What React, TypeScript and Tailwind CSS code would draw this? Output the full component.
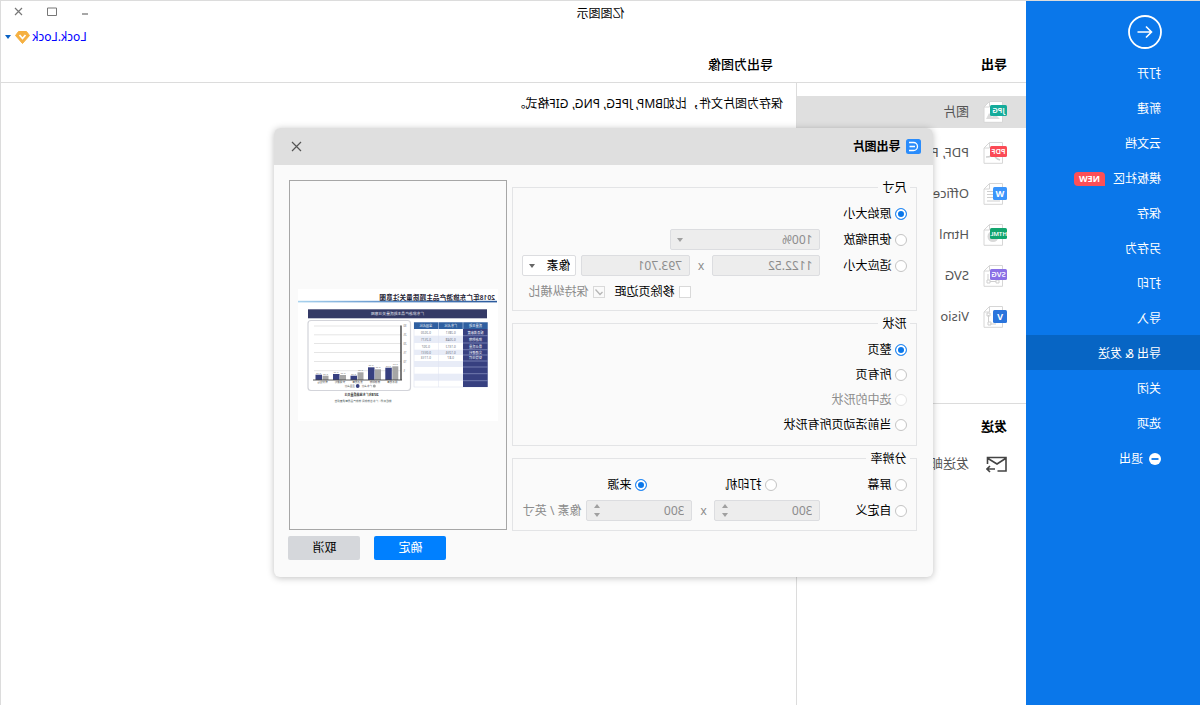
import { useState } from "react";
import type { ReactNode } from "react";

const menu = ["打开", "新建", "云文档", "模板社区", "保存", "另存为", "打印", "导入", "导出 & 发送", "关闭", "选项", "退出"];

const formats = [
  { label: "图片", tag: "JPG", color: "#14ab9a" },
  { label: "PDF, PS, EPS", tag: "PDF", color: "#fb4a55" },
  { label: "Office", tag: "W", color: "#3b95fb" },
  { label: "Html", tag: "HTML", color: "#12a56e" },
  { label: "SVG", tag: "SVG", color: "#8a70e6" },
  { label: "Visio", tag: "V", color: "#2a74dc" },
];

function FormatIcon({ tag, color }: { tag: string; color: string }) {
  const single = tag.length === 1;
  const w = single ? 14 : 17;
  const h = single ? 13 : 11;
  return (
    <svg width="24" height="22" viewBox="0 0 24 22" aria-hidden="true">
      <path d="M4.5 .5H17.5L23 6V21.3H4.5Z" fill="#fff" stroke="#d6d6d6" />
      <path d="M17.5 .5V6H23" fill="none" stroke="#d6d6d6" />
      {tag === "JPG" && <path d="M7 18L12 13L15 16L18 12L21 18Z" fill="#dcdcdc" />}
      {tag === "PDF" && <path d="M7 18C11 17 13 14 14 10C14 14 17 15 21 15" fill="none" stroke="#cfcfcf" strokeWidth="1.6" />}
      {tag === "W" && <path d="M14 8.5H20M14 11.5H20M14 14.5H20M7 18H20" stroke="#cfcfcf" />}
      {tag === "HTML" && <circle cx="14" cy="12.5" r="5.5" fill="#d9d9d9" />}
      {tag === "SVG" && <path d="M8 15h3v3H8zM17 15h3v3h-3zM11 16.5h6M19 9v6" fill="none" stroke="#cfcfcf" />}
      {tag === "V" && <path d="M18.500 9v7M17 7h3v3h-3zM11 18h6M16 16h3v3h-3z" fill="none" stroke="#cfcfcf" />}
      <rect x="0" y="4" width={w} height={h} rx="1.5" fill={color} />
      <text
        x={w / 2}
        y={single ? 14 : 12.3}
        textAnchor="middle"
        fill="#fff"
        fontSize={single ? 9 : tag === "HTML" ? 6 : 7.5}
        fontWeight={single ? 700 : 600}
      >
        {tag}
      </text>
    </svg>
  );
}

function Radio({ name, label, defaultChecked, disabled }: { name: string; label: string; defaultChecked?: boolean; disabled?: boolean }) {
  return (
    <label className={disabled ? "flex items-center gap-1 whitespace-nowrap text-[#8c8c8c]" : "flex items-center gap-1 whitespace-nowrap"}>
      <input
        type="radio"
        name={name}
        defaultChecked={defaultChecked}
        disabled={disabled}
        className="size-3 shrink-0 appearance-none rounded-full border border-[#c4c4c4] bg-white checked:border-[#2b8cf5] checked:bg-[#0a77ea] checked:shadow-[inset_0_0_0_2px_#fff] disabled:border-[#e4e4e4]"
      />
      {label}
    </label>
  );
}

function Check({ label, defaultChecked, disabled }: { label: string; defaultChecked?: boolean; disabled?: boolean }) {
  return (
    <label className={disabled ? "flex items-center gap-1 text-[#8c8c8c]" : "flex items-center gap-1"}>
      <span className="grid size-3 shrink-0">
        <input
          type="checkbox"
          defaultChecked={defaultChecked}
          disabled={disabled}
          className="peer col-start-1 row-start-1 size-3 appearance-none border border-[#d9d9d9] bg-white disabled:bg-[#fafafa]"
        />
        <svg viewBox="0 0 12 12" className="pointer-events-none col-start-1 row-start-1 size-3 opacity-0 peer-checked:opacity-100" aria-hidden="true">
          <path d="M2.500 6L5 8.500L9.500 3.500" fill="none" stroke="#b5b5b5" strokeWidth="1.300" />
        </svg>
      </span>
      {label}
    </label>
  );
}

function Group({ title, className, children }: { title: string; className: string; children: ReactNode }) {
  return (
    <fieldset className="min-w-0 border border-[#e3e4e6]">
      <legend className="ml-1.5 px-1 leading-4">{title}</legend>
      <div className={className}>{children}</div>
    </fieldset>
  );
}

function Caret({ color }: { color: string }) {
  return (
    <svg width="6" height="4" viewBox="0 0 6 4" className="shrink-0" aria-hidden="true">
      <path d="M0 0H6L3 4Z" fill={color} />
    </svg>
  );
}

const field = "h-[21px] w-full min-w-0 rounded-xs border border-[#dcdde0] bg-[#ededed] px-[7px] text-xs text-[#8c8c8c]";

function Spinner({ label }: { label: string }) {
  return (
    <div className="flex h-[21px] min-w-0 flex-1 items-center rounded-xs border border-[#dcdde0] bg-[#ededed] pr-[7px] pl-[7px]">
      <input aria-label={label} defaultValue="300" disabled className="w-0 min-w-0 flex-1 text-xs text-[#8c8c8c]" />
      <div className="flex flex-col gap-[5px]">
        <button type="button" disabled aria-label={`${label} +`}>
          <svg width="6" height="4" viewBox="0 0 6 4" className="block" aria-hidden="true">
            <path d="M0 4H6L3 0Z" fill="#a0a0a0" />
          </svg>
        </button>
        <button type="button" disabled aria-label={`${label} -`}>
          <svg width="6" height="4" viewBox="0 0 6 4" className="block" aria-hidden="true">
            <path d="M0 0H6L3 4Z" fill="#a0a0a0" />
          </svg>
        </button>
      </div>
    </div>
  );
}

const rowLines = [40, 46.7, 54, 60.7, 66, 72, 78, 84.7, 91.7, 98];
const tableRows = [
  ["服务满意度", "0.2851", "0.2020"],
  ["旅游购物", "0.2048", "0.2571"],
  ["景点质量", "0.1312", "0.207"],
  ["交通便利", "0.1256", "0.0551"],
  ["餐饮住宿", "0.87", "0.1153"],
];
const bars = [
  { x: 99.7, gray: 77.3, blue: 78.7, name: "服务质量" },
  { x: 117, gray: 80.3, blue: 78.3, name: "旅游购物" },
  { x: 134.500, gray: 83.3, blue: 86.7, name: "景点质量" },
  { x: 152, gray: 86, blue: 85, name: "交通便利" },
  { x: 169.500, gray: 86.7, blue: 85.7, name: "餐饮住宿" },
];

function SlidePreview() {
  return (
    <svg viewBox="0 0 200 132" className="w-[200px]" role="img" aria-label="导出预览">
      <defs>
        <linearGradient id="rule" x1="0" x2="1">
          <stop offset="0" stopColor="#2b5a9c" />
          <stop offset=".5" stopColor="#5a8cc8" />
          <stop offset="1" stopColor="#a9d3ee" />
        </linearGradient>
      </defs>
      <rect width="200" height="132" fill="#fff" />
      <text x="3" y="10.500" fontSize="6.700" fontWeight="600" fill="#1d2233">2018年广东旅游产品主题质量关注意图</text>
      <rect x="1" y="11.800" width="199" height="1.600" fill="url(#rule)" />
      <rect x="11" y="20.300" width="179" height="9" fill="#343a66" />
      <text x="100.500" y="26.300" fontSize="3.800" textAnchor="middle" fill="#e8e9f2">广东旅游产品主题质量关注意图</text>

      <rect x="10.300" y="33.300" width="73.700" height="64.700" fill="#fff" stroke="#d8dcea" strokeWidth=".5" />
      {[1, 3, 5, 7].map((i) => (
        <rect key={i} x="35" y={rowLines[i]} width="49" height={rowLines[i + 1] - rowLines[i]} fill="#e8ecf7" />
      ))}
      <path d="M59.500 40V98" stroke="#dfe3f0" strokeWidth=".5" />
      <rect x="10.300" y="33.300" width="73.700" height="6.700" fill="#2f5fa0" />
      <rect x="10.300" y="40" width="24.700" height="58" fill="#374080" />
      <path d="M35 33V40M59.500 33V40" stroke="#dfe3f0" strokeWidth=".5" />
      {rowLines.slice(1, 9).map((y) => (
        <path key={y} d={`M10.300 ${y}H35`} stroke="#9aa2cc" strokeWidth=".6" />
      ))}
      {["质量主题", "广东占比", "全国占比"].map((t, i) => (
        <text key={t} x={22.500 + i * 24.800} y="38" fontSize="3.200" textAnchor="middle" fill="#fff">{t}</text>
      ))}
      {tableRows.map((r, i) =>
        r.map((t, j) => (
          <text
            key={t}
            x={22.500 + j * 24.800}
            y={(rowLines[i] + rowLines[i + 1]) / 2 + 1.200}
            fontSize="3.200"
            textAnchor="middle"
            fill={j ? "#6b6f80" : "#fff"}
          >
            {t}
          </text>
        ))
      )}

      <rect x="87.500" y="31.500" width="102.500" height="70" rx="3" fill="#fff" stroke="#d3d4da" strokeWidth="1.200" />
      {[37, 45.8, 54.500, 63.500, 72.500, 81.700].map((y, i) => (
        <g key={y}>
          <path d={`M97 ${y}H184`} stroke="#dedede" strokeWidth=".8" />
          <text x="94.500" y={y + 1} fontSize="2.600" textAnchor="end" fill="#666">{`${30 - i * 5}`}</text>
        </g>
      ))}
      {bars.map((b) => (
        <g key={b.name}>
          <rect x={b.x} y={b.gray} width="6" height={91 - b.gray} fill="#a6a6a6" />
          <rect x={b.x + 6.500} y={b.blue} width="6.500" height={91 - b.blue} fill="#374080" />
          <text x={b.x + 3} y={b.gray - 1} fontSize="2.400" textAnchor="middle" fill="#888">0.28</text>
          <text x={b.x + 10} y={b.blue - 1} fontSize="2.400" textAnchor="middle" fill="#888">0.20</text>
          <text x={b.x + 6} y="94.300" fontSize="2.600" textAnchor="middle" fill="#555">{b.name}</text>
        </g>
      ))}
      <path d="M97 36.500V91" stroke="#333" strokeWidth="1.300" />
      <path d="M96 91H185" stroke="#444" strokeWidth=".9" />
      <circle cx="123.700" cy="97" r="1.500" fill="#a6a6a6" />
      <text x="126" y="98" fontSize="2.600" fill="#555">广东占比</text>
      <circle cx="140.300" cy="97" r="1.900" fill="#374080" />
      <text x="143" y="98" fontSize="2.600" fill="#555">全国占比</text>
      <text x="136.500" y="107.300" fontSize="3" fontWeight="700" textAnchor="middle" fill="#222">2018年广东旅游质量关注</text>
      <text x="135" y="113.300" fontSize="2.700" textAnchor="middle" fill="#566">数据来源：广东省旅游局 旅游产品质量调查报告</text>
    </svg>
  );
}

function ExportDialog({ onClose }: { onClose: () => void }) {
  return (
    <div role="dialog" aria-labelledby="dialog-title" className="w-[659px] overflow-hidden rounded-md bg-[#fafafa] text-xs shadow-[0_1px_7px_rgba(0,0,0,0.25)]">
      <div className="flex h-[37px] items-center gap-1.5 bg-[#dfdfdf] pr-[17px] pl-3">
        <svg width="15" height="15" viewBox="0 0 15 15" aria-hidden="true">
          <rect width="15" height="15" rx="2.500" fill="#2a8cfb" />
          <path d="M12 3.500H7.500A4 4 0 0 0 7.500 11.500H12M6 7.500H11.500" fill="none" stroke="#fff" strokeWidth="1.300" />
        </svg>
        <h2 id="dialog-title" className="flex-1 pt-0.5 font-bold">导出图片</h2>
        <button type="button" aria-label="关闭" onClick={onClose}>
          <svg width="11" height="11" viewBox="0 0 11 11" className="block" aria-hidden="true">
            <path d="M1 1L10 10M10 1L1 10" stroke="#555" strokeWidth="1.200" />
          </svg>
        </button>
      </div>
      <form className="flex gap-[5px] pt-[15px] pr-3.5 pb-[17px] pl-4" onSubmit={(e) => e.preventDefault()}>
        <div className="flex w-[405px] flex-col gap-[5px]">
          <Group title="尺寸" className="px-[9px] py-[5px]">
            <div className="flex h-[26px] items-center">
              <Radio name="size" label="原始大小" defaultChecked />
            </div>
            <div className="flex h-[26px] items-center">
              <div className="w-[87px]"><Radio name="size" label="使用缩放" /></div>
              <div className="grid w-[150px] items-center">
                <select disabled aria-label="缩放" className={`${field} col-start-1 row-start-1 appearance-none opacity-100`}>
                  <option>100%</option>
                </select>
                <span className="pointer-events-none col-start-1 row-start-1 mr-[7px] justify-self-end"><Caret color="#a0a0a0" /></span>
              </div>
            </div>
            <div className="flex h-[26px] items-center">
              <div className="w-[87px] shrink-0"><Radio name="size" label="适应大小" /></div>
              <div className="flex flex-1"><input aria-label="宽度" disabled defaultValue="1122.52" className={field} /></div>
              <span className="w-[22px] text-center text-[#8c8c8c]">x</span>
              <div className="flex flex-1"><input aria-label="高度" disabled defaultValue="793.701" className={field} /></div>
              <div className="ml-[5px] grid w-[54px] items-center">
                <select aria-label="单位" className="col-start-1 row-start-1 h-[21px] appearance-none rounded-xs border border-[#dcdde0] bg-white px-[5px] text-xs">
                  <option>像素</option>
                  <option>毫米</option>
                </select>
                <span className="pointer-events-none col-start-1 row-start-1 mr-[7px] justify-self-end"><Caret color="#666666" /></span>
              </div>
            </div>
            <div className="flex h-[26px] items-center justify-end gap-2.5 pr-1.5">
              <Check label="移除页边距" />
              <Check label="保持纵横比" defaultChecked disabled />
            </div>
          </Group>
          <Group title="形状" className="px-[9px] pt-1.5 pb-[7px]">
            <div className="flex h-[25px] items-center"><Radio name="shape" label="整页" defaultChecked /></div>
            <div className="flex h-[25px] items-center"><Radio name="shape" label="所有页" /></div>
            <div className="flex h-[25px] items-center"><Radio name="shape" label="选中的形状" disabled /></div>
            <div className="flex h-[25px] items-center"><Radio name="shape" label="当前活动页所有形状" /></div>
          </Group>
          <Group title="分辨率" className="px-[9px] pt-[5px] pb-1.5">
            <div className="grid h-[26px] grid-cols-[130px_130px_1fr] items-center">
              <Radio name="dpi" label="屏幕" />
              <Radio name="dpi" label="打印机" />
              <Radio name="dpi" label="来源" defaultChecked />
            </div>
            <div className="flex h-[26px] items-center text-[#8c8c8c]">
              <div className="w-[87px] shrink-0 text-black"><Radio name="dpi" label="自定义" /></div>
              <Spinner label="水平" />
              <span className="w-[22px] text-center">x</span>
              <Spinner label="垂直" />
              <span className="w-16 pl-[5px] whitespace-nowrap">像素 / 英寸</span>
            </div>
          </Group>
        </div>
        <div className="flex flex-1 flex-col gap-1.5">
          <div className="mr-px flex h-[350px] items-center justify-center border border-[#a6a6a6]">
            <SlidePreview />
          </div>
          <div className="flex justify-end gap-3.5">
            <button type="submit" className="h-6 w-[72px] rounded-xs bg-[#0080ff] text-white">确定</button>
            <button type="button" onClick={onClose} className="h-6 w-[72px] rounded-xs bg-[#d5d7db]">取消</button>
          </div>
        </div>
      </form>
    </div>
  );
}

export default function App() {
  const [open, setOpen] = useState(true);
  return (
    <div className="relative flex min-h-screen -scale-x-100 overflow-hidden border-t border-r border-[#dcdcdc] bg-white font-['Noto_Sans','Noto_Sans_CJK_SC',sans-serif] text-xs text-black">
      <nav className="w-[174px] shrink-0 bg-[#0a77ea] text-white">
        <button type="button" aria-label="返回" className="mt-3.5 ml-[38px] block">
          <svg width="34" height="34" viewBox="0 0 34 34" className="block" aria-hidden="true">
            <circle cx="17" cy="17" r="16" fill="none" stroke="#fff" strokeWidth="1.800" />
            <path d="M24.500 17H10.500M16 11.500L10.500 17L16 22.500" fill="none" stroke="#fff" strokeWidth="1.600" />
          </svg>
        </button>
        <ul className="mt-1.5">
          {menu.map((item) => (
            <li key={item}>
              <a href="#" className={item === "导出 & 发送" ? "flex h-[35px] items-center bg-[#0765c4] pt-0.5 pl-[39px]" : "flex h-[35px] items-center pt-0.5 pl-[39px]"}>
                {item === "退出" && (
                  <svg width="12" height="12" viewBox="0 0 12 12" className="mr-1.5" aria-hidden="true">
                    <circle cx="6" cy="6" r="6" fill="#fff" />
                    <path d="M2.500 6H9.500" stroke="#0a77ea" strokeWidth="1.800" />
                  </svg>
                )}
                {item}
                {item === "模板社区" && (
                  <span className="ml-2 rounded-sm rounded-bl-none bg-[#fd4f56] px-[5px] text-[9px] leading-[14px] font-bold">NEW</span>
                )}
              </a>
            </li>
          ))}
        </ul>
      </nav>

      <div className="flex min-w-0 flex-1 flex-col">
        <header className="border-b border-[#dcdcdc]">
          <div className="grid h-6 grid-cols-[1fr_174px] items-center">
            <h1 className="pt-0.5 text-center">亿图图示</h1>
            <div className="flex items-center justify-end gap-6 pr-[13px] pb-1 text-[#777]">
              <button type="button" aria-label="最小化">
                <svg width="9" height="9" viewBox="0 0 9 9" className="block" aria-hidden="true"><path d="M2 7H8" stroke="currentColor" strokeWidth="1.300" /></svg>
              </button>
              <button type="button" aria-label="最大化">
                <svg width="10" height="9" viewBox="0 0 10 9" className="block" aria-hidden="true"><path d="M.5 1H9.500V8.500H.5Z" fill="none" stroke="currentColor" /></svg>
              </button>
              <button type="button" aria-label="关闭窗口">
                <svg width="9" height="9" viewBox="0 0 9 9" className="block" aria-hidden="true"><path d="M1 1L8 8M8 1L1 8" stroke="currentColor" strokeWidth="1.200" /></svg>
              </button>
            </div>
          </div>
          <div className="flex h-6 items-center justify-end pr-1">
            <button type="button" className="flex items-center gap-0.5 text-[#0000ff]">
              Lock.Lock
              <svg width="15" height="13" viewBox="0 0 15 13" aria-hidden="true">
                <path d="M3.500 .5H11.500L14.500 4.500L7.500 12.500L.5 4.500Z" fill="#f5b041" stroke="#f5b041" strokeLinejoin="round" />
                <path d="M4.500 4L7.500 7.500L10.500 4" fill="none" stroke="#fff" strokeWidth="1.700" />
              </svg>
              <span className="ml-0.5"><Caret color="#0a62c4" /></span>
            </button>
          </div>
          <div className="flex h-[33px] items-center pb-0.5 text-[13px]">
            <h2 className="w-[253px] pl-[19px] font-bold">导出</h2>
            <h3 className="font-medium">导出为图像</h3>
          </div>
        </header>

        <div className="flex flex-1">
          <section className="w-[230px] shrink-0 border-r border-[#dcdcdc] pt-[13px] text-[13px] text-[#555]">
            <ul className="flex flex-col gap-[9px]">
              {formats.map((f, i) => (
                <li key={f.label}>
                  <a href="#" className={i === 0 ? "flex h-8 items-center gap-3.5 bg-[#dfdfdf] pl-[19px]" : "flex h-8 items-center gap-3.5 pl-[19px]"}>
                    <FormatIcon tag={f.tag} color={f.color} />
                    {f.label}
                  </a>
                </li>
              ))}
            </ul>
            <div className="mt-[70px] border-t border-[#dcdcdc] pt-3 pl-[19px]">
              <h2 className="leading-5 font-bold text-black">发送</h2>
              <a href="#" className="mt-3.5 flex h-7 items-center gap-[17px]">
                <svg width="21" height="17" viewBox="0 0 21 17" aria-hidden="true">
                  <path d="M9.500 15H1V1.500H19.500V8M1.500 2.500L10 8L19 2.500M12 13H20M17 10L20 13L17 16" fill="none" stroke="#444" strokeWidth="1.600" />
                </svg>
                发送邮件
              </a>
            </div>
          </section>
          <main className="flex-1 pt-[13px] pl-[13px]">
            <p>保存为图片文件，比如BMP, JPEG, PNG, GIF格式。</p>
          </main>
        </div>
      </div>

      {open && (
        <div className="absolute inset-0 flex items-center justify-center pr-[7px] pb-0.5">
          <ExportDialog onClose={() => setOpen(false)} />
        </div>
      )}
    </div>
  );
}
